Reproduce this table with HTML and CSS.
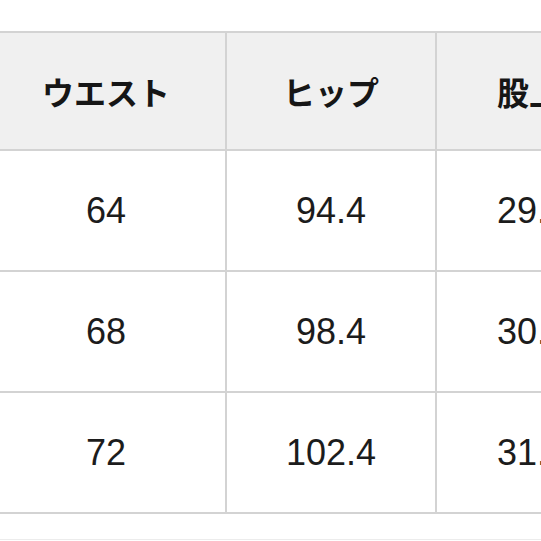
FILE: index.html
```html
<!DOCTYPE html>
<html lang="ja">
<head>
<meta charset="utf-8">
<link rel="stylesheet" href="styles.css">
</head>
<body>
<div class="page">
  <div class="table">
    <div class="row head">
      <div class="cell c1">ウエスト</div>
      <div class="cell c2">ヒップ</div>
      <div class="cell c3">股上</div>
    </div>
    <div class="row">
      <div class="cell c1">64</div>
      <div class="cell c2">94.4</div>
      <div class="cell c3">29.5</div>
    </div>
    <div class="row">
      <div class="cell c1">68</div>
      <div class="cell c2">98.4</div>
      <div class="cell c3">30.5</div>
    </div>
    <div class="row">
      <div class="cell c1">72</div>
      <div class="cell c2">102.4</div>
      <div class="cell c3">31.5</div>
    </div>
  </div>
  <div class="rule"></div>
</div>
</body>
</html>
```
FILE: styles.css
```css
html, body {
  margin: 0;
  padding: 0;
  background: #ffffff;
  overflow: hidden;
}
.page {
  width: 541px;
  height: 541px;
  overflow: hidden;
  padding-top: 31px;
  box-sizing: border-box;
}
.table {
  margin-left: -13px;
  width: 700px;
  border-top: 2px solid #d3d3d3;
}
.row {
  display: grid;
  grid-template-columns: 240px 210px 200px;
  height: 121px;
}
.row.head {
  height: 118px;
  background: #f0f0f0;
}
.cell {
  box-sizing: border-box;
  border-right: 2px solid #d3d3d3;
  border-bottom: 2px solid #d3d3d3;
  display: flex;
  align-items: center;
  justify-content: center;
  font-family: "Liberation Sans", Arial, sans-serif;
  font-size: 36px;
  color: #1c1c1c;
  white-space: nowrap;
}
.head .cell {
  font-family: "Noto Sans CJK JP", "Noto Sans", sans-serif;
  font-weight: 700;
  font-size: 32px;
  color: #161616;
}
.cell.c3 {
  justify-content: flex-start;
  padding-left: 60px;
}
.rule {
  margin-top: 25px;
  border-top: 1px solid #ececec;
}
```
